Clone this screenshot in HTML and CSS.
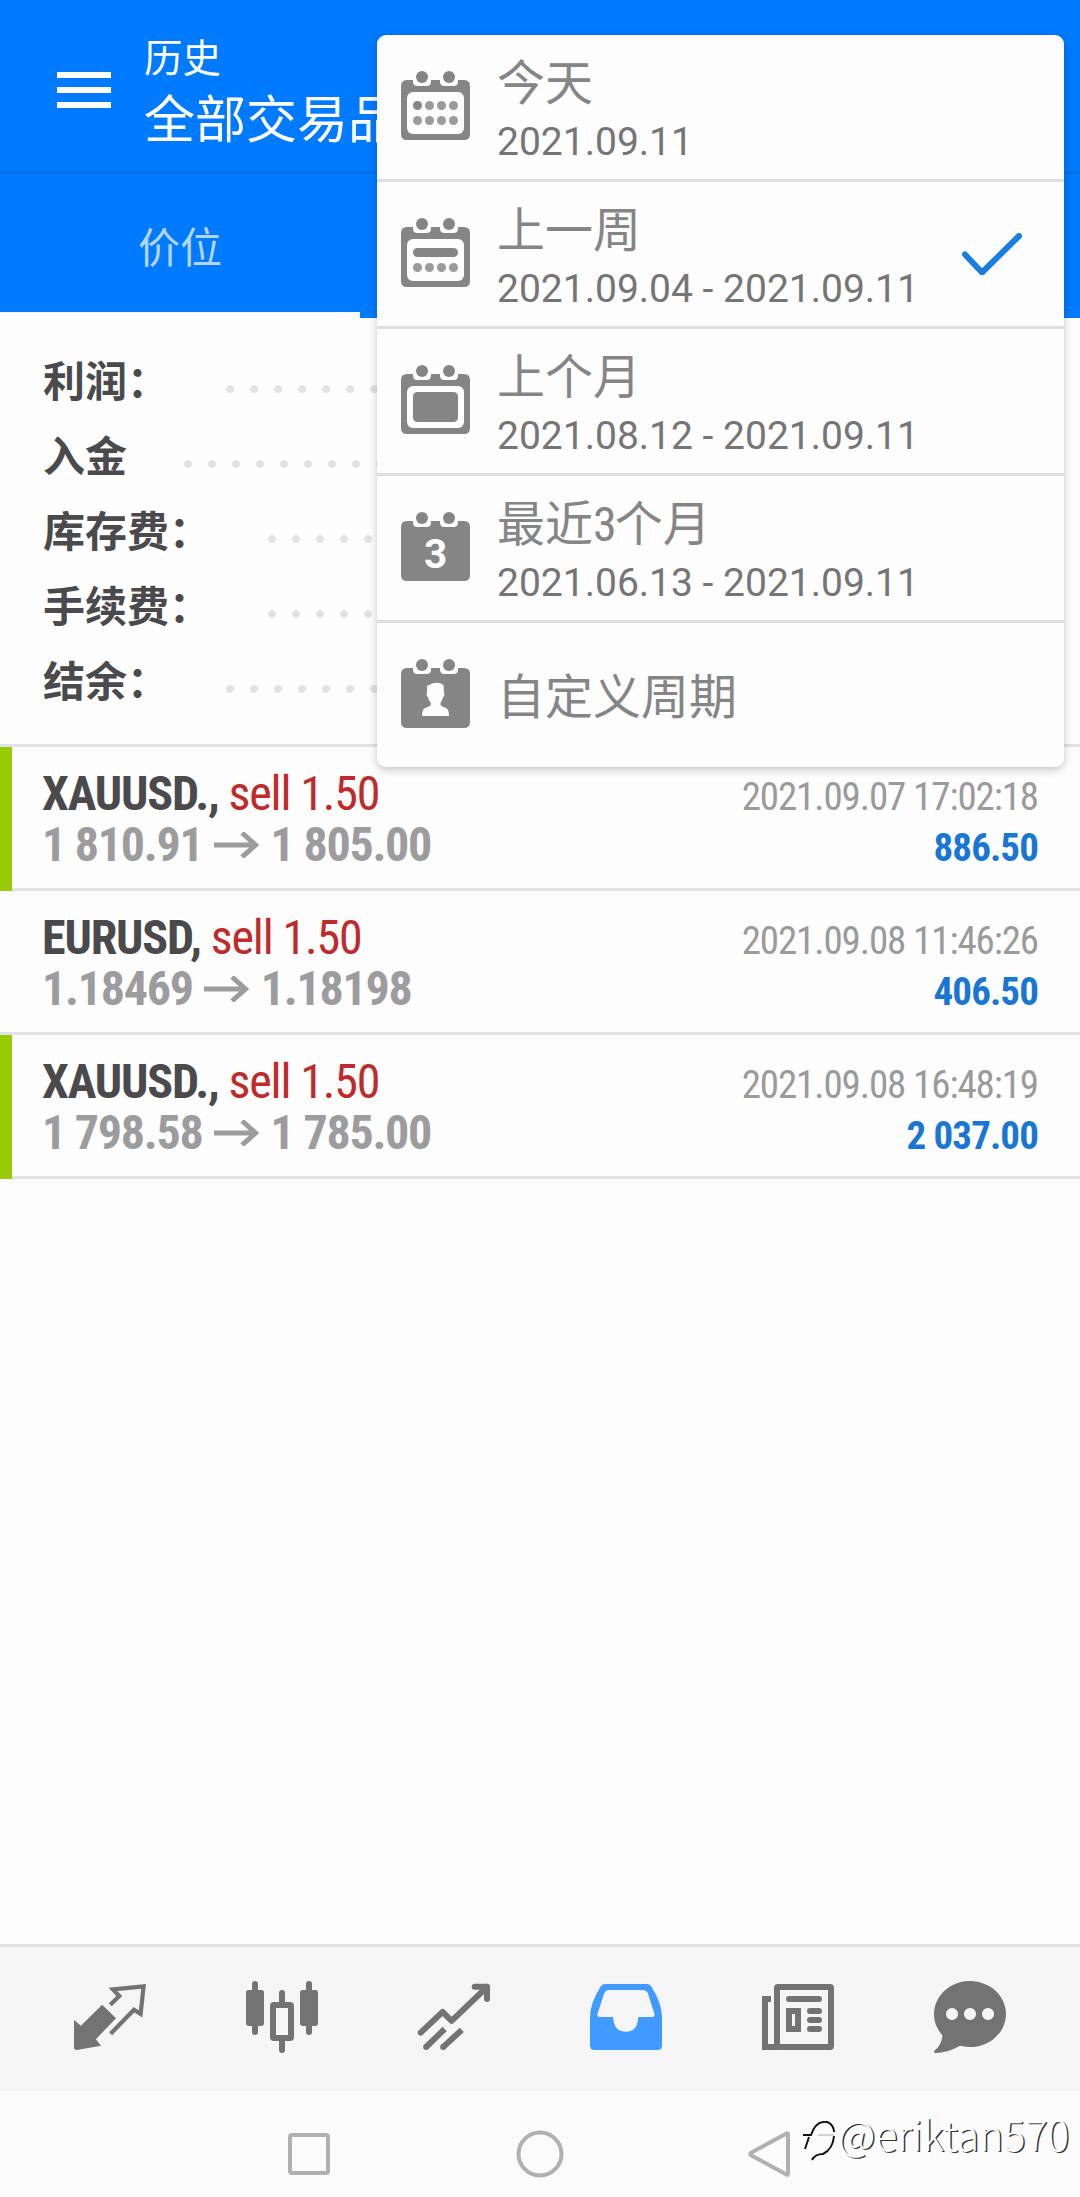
FILE: index.html
```html
<!DOCTYPE html>
<html lang="zh-CN">
<head>
<meta charset="utf-8">
<title>历史</title>
<link rel="stylesheet" href="styles.css">
</head>
<body>
<div class="screen">
  <header class="appbar">
    <svg class="burger" viewBox="0 0 54 36"><path d="M0 3H54M0 18H54M0 33H54"/></svg>
    <div class="heading">
      <div class="heading-small">历史</div>
      <div class="heading-large">全部交易品种</div>
    </div>
  </header>
  <nav class="tabs"><div class="tab tab-active">价位</div></nav>

  <section class="summary">
    <div class="sum-row"><span>利润：</span><i class="leader"></i></div>
    <div class="sum-row"><span>入金</span><i class="leader"></i></div>
    <div class="sum-row"><span>库存费：</span><i class="leader"></i></div>
    <div class="sum-row"><span>手续费：</span><i class="leader"></i></div>
    <div class="sum-row"><span>结余：</span><i class="leader"></i></div>
  </section>

  <main class="deals">
    <article class="deal marked">
      <div class="line"><span class="cond symbol">XAUUSD., <span class="side">sell 1.50</span></span><span class="cond time">2021.09.07 17:02:18</span></div>
      <div class="line"><span class="prices"><span class="cond price">1 810.91</span><svg class="arrow" viewBox="0 0 45 26"><path d="M0 13H42M28 1L41.500 13L28 25"/></svg><span class="cond price">1 805.00</span></span><span class="cond profit">886.50</span></div>
    </article>
    <article class="deal">
      <div class="line"><span class="cond symbol">EURUSD, <span class="side">sell 1.50</span></span><span class="cond time">2021.09.08 11:46:26</span></div>
      <div class="line"><span class="prices"><span class="cond price">1.18469</span><svg class="arrow" viewBox="0 0 45 26"><path d="M0 13H42M28 1L41.500 13L28 25"/></svg><span class="cond price">1.18198</span></span><span class="cond profit">406.50</span></div>
    </article>
    <article class="deal marked">
      <div class="line"><span class="cond symbol">XAUUSD., <span class="side">sell 1.50</span></span><span class="cond time">2021.09.08 16:48:19</span></div>
      <div class="line"><span class="prices"><span class="cond price">1 798.58</span><svg class="arrow" viewBox="0 0 45 26"><path d="M0 13H42M28 1L41.500 13L28 25"/></svg><span class="cond price">1 785.00</span></span><span class="cond profit">2 037.00</span></div>
    </article>
  </main>

  <footer class="bottom-nav">
    <svg viewBox="0 0 24 24"><path class="fill" d="M0 13L2.3 14.9L9.4 7.9L14 12.4L7.3 19.4L9 21.6L.9 23Q0 23 0 22.2Z"/><path class="stroke thin" d="M12.1 7.9L15.1 5L13 2.8L23.2 1.8L22.2 11L20 9.6L12.2 17.6"/></svg>
    <svg viewBox="0 0 24 24"><rect class="fill" y="3" width="6" height="12" rx=".8"/><rect class="fill" x="18" y="3" width="6" height="12" rx=".8"/><path class="stroke round" d="M3 1V17M21 1V17M12 4V8M12 19V23"/><rect class="stroke" x="9" y="8" width="6" height="11" rx=".3"/></svg>
    <svg viewBox="0 0 24 24"><path class="stroke round" d="M.9 17.2L8.2 10.3L11.2 13.3L23 2M18.9 1.9H23V6"/><path class="stroke" d="M8.9 16L2.7 22M14.6 16.3L8.4 22"/><g class="fill"><circle cx="2.7" cy="22" r="1"/><circle cx="8.4" cy="22" r="1"/></g></svg>
    <svg class="current" viewBox="0 0 24 24"><path fill-rule="evenodd" d="M4.9 1H19.1Q20 1 20.5 1.9Q24 7.500 24 12V21.500Q24 23 22.500 23H1.500Q0 23 0 21.500V12Q0 7.500 3.500 1.900Q4 1 4.900 1ZM6.400 3Q5.200 3 4.700 4.200L2.500 11Q2.300 12 3.200 12H7.700Q7.900 16.900 12 16.900Q15.900 16.900 16.100 12H20.800Q21.700 12 21.500 11L19.300 4.200Q18.800 3 17.600 3Z"/></svg>
    <svg viewBox="0 0 24 24"><rect class="stroke" x="5" y="2" width="18" height="20" rx=".3"/><path class="stroke" d="M3 6H1V22H5"/><path class="stroke round" d="M9 6H19M16 10H19M16 13H19M16 16H19"/><rect class="stroke" x="9" y="10" width="3" height="6"/></svg>
    <svg viewBox="0 0 24 24"><path class="fill" fill-rule="evenodd" d="M2.800 18.100A12 11 0 1 1 8.700 21.600Q4.500 24 .4 24Q-.2 23.700 .2 23.200Q2.500 21.500 2.800 18.100ZM6 9a2 2 0 1 0 .01 0ZM12 9a2 2 0 1 0 .01 0ZM18 9a2 2 0 1 0 .01 0Z"/></svg>
  </footer>
  <div class="system-bar">
    <svg viewBox="0 0 48 48"><rect x="5" y="5" width="38" height="38" rx="2"/></svg>
    <svg viewBox="0 0 48 48"><circle cx="24" cy="24" r="21.500"/></svg>
    <svg viewBox="0 0 48 48"><path d="M39.500 3.500Q41 2.500 41 4.500V43.500Q41 45.500 39.500 44.500L4.500 25.500Q2 24 4.500 22.500Z"/></svg>
  </div>

  <div class="menu">
    <div class="item">
      <svg class="cal" viewBox="0 0 23 23"><use href="#frame"/><rect class="hole" x="2" y="7" width="19" height="14" rx="2"/><circle cx="5.500" cy="11.500" r="1.500"/><g class="pale"><circle cx="9.500" cy="11.500" r="1.500"/><circle cx="13.500" cy="11.500" r="1.500"/><circle cx="17.500" cy="11.500" r="1.500"/><use href="#days"/></g></svg>
      <div class="label"><div class="name">今天</div><div class="range">2021.09.11</div></div>
    </div>
    <div class="item">
      <svg class="cal" viewBox="0 0 23 23"><use href="#frame"/><rect class="hole" x="2" y="7" width="19" height="14" rx="2"/><rect x="4" y="10" width="15" height="3" rx="1.500"/><g class="pale"><use href="#days"/></g></svg>
      <div class="label"><div class="name">上一周</div><div class="range">2021.09.04 - 2021.09.11</div></div>
      <svg class="check" viewBox="0 0 60 42"><path d="M3 21.500L20 39.500L57 3"/></svg>
    </div>
    <div class="item">
      <svg class="cal" viewBox="0 0 23 23"><use href="#frame"/><rect class="hole" x="2" y="7" width="19" height="14" rx="2"/><rect x="4" y="9" width="15" height="10" rx="1.500"/></svg>
      <div class="label"><div class="name">上个月</div><div class="range">2021.08.12 - 2021.09.11</div></div>
    </div>
    <div class="item">
      <svg class="cal" viewBox="0 0 23 23"><use href="#frame"/><text class="hole three" x="11.500" y="18.700">3</text></svg>
      <div class="label"><div class="name">最近<span class="cond digit">3</span>个月</div><div class="range">2021.06.13 - 2021.09.11</div></div>
    </div>
    <div class="item">
      <svg class="cal" viewBox="0 0 23 23"><use href="#frame"/><path class="hole" d="M8.700 8.900Q9.500 8.600 10 8.300Q12.500 7.300 14.200 8.700L14.300 10.800Q14.700 12.500 14 12.700Q13.600 14.300 13.200 14.400V15.300Q13.500 15.800 15 16.300Q16 16.700 16 19H7Q7 16.700 8 16.300Q9.600 15.800 9.900 15.300V14.400Q9.300 14.200 9 12.700Q8.300 12.500 8.700 10.800Z"/></svg>
      <div class="label single"><div class="name">自定义周期</div></div>
    </div>
  </div>

  <div class="watermark"><svg viewBox="0 0 34 42"><path class="wm-light" d="M1 15H7Q10 2 20 2Q30 2 30 15Q29 29 19 33Q13 33 9 39M6 17L2 29"/><path class="wm-shadow" d="M0 14H8Q12 2 20 1Q24 0 27 2.500Q31 6 31 11M31 15Q30 28 20 33Q12 33 9 39M6 16L2 28"/><path class="wm-hair" d="M15 14H31"/></svg><span>@eriktan570</span></div>
</div>

<svg class="defs" width="0" height="0">
  <defs>
    <g id="frame"><path d="M2 3H4V3.500Q4 5 5.500 5H8.500Q10 5 10 3.500V3H13V3.500Q13 5 14.500 5H17.500Q19 5 19 3.500V3H21Q23 3 23 5V21Q23 23 21 23H2Q0 23 0 21V5Q0 3 2 3Z"/><circle cx="7" cy="2" r="2"/><circle cx="16" cy="2" r="2"/></g>
    <g id="days"><circle cx="5.500" cy="16.500" r="1.500"/><circle cx="9.500" cy="16.500" r="1.500"/><circle cx="13.500" cy="16.500" r="1.500"/><circle cx="17.500" cy="16.500" r="1.500"/></g>
  </defs>
</svg>
</body>
</html>
```
FILE: styles.css
```css
* { box-sizing: border-box; }
body { margin: 0; font-family: Roboto, "Noto Sans CJK SC", sans-serif; background: #fdfdfd; }
.defs { position: absolute; }
.screen { position: relative; width: 1080px; height: 2197px; overflow: hidden; display: flex; flex-direction: column; background: #fdfdfd; }

.appbar { height: 174px; flex: none; background: #007aff; border-bottom: 3px solid #006fe6; display: flex; padding: 34px 0 0 57px; }
.burger { width: 54px; height: 36px; margin-top: 38px; stroke: #fff; stroke-width: 6; }
.heading { margin-left: 33px; color: #fff; white-space: nowrap; }
.heading-small { font-size: 38.500px; line-height: 50px; }
.heading-large { font-size: 51px; line-height: 73px; }
.tabs { height: 144px; flex: none; background: #007aff; display: flex; }
.tab { width: 360px; text-align: center; font-size: 42px; line-height: 149px; color: #b5d5fa; }
.tab-active { border-bottom: 6px solid #fdfdfd; }

.summary { height: 429px; flex: none; padding: 23px 43px 0 43px; border-bottom: 3px solid #e2e2e2; }
.sum-row { height: 75px; display: flex; align-items: center; font-size: 42px; font-weight: 700; color: #4a4a4c; }
.leader { flex: 1; height: 8px; margin-top: 20px; margin-left: 46px; background: radial-gradient(circle at 15px 4px, #e2e2e2 3.600px, transparent 4.200px) 0 0 / 24px 8px repeat-x; }

.deals { flex: 1; }
.deal { height: 144px; border-bottom: 3px solid #e2e2e2; padding: 21px 42px 0 42px; position: relative; }
.marked::before { content: ""; position: absolute; left: 0; top: 0; width: 12px; height: 144px; background: #96cb05; }
.line { display: flex; justify-content: space-between; align-items: baseline; height: 51px; line-height: 51px; white-space: nowrap; }
.cond { font-family: "Roboto Condensed", Roboto, sans-serif; font-stretch: 75%; letter-spacing: -1.100px; }
.symbol { font-size: 48px; font-weight: 700; color: #4a4a4c; letter-spacing: -1.150px; }
.side { font-weight: 400; color: #bf2b2b; }
.price { font-size: 48px; font-weight: 700; color: #9c9c9f; letter-spacing: -1.250px; }
.time { font-size: 39px; color: #9a9a9a; }
.profit { font-size: 39px; font-weight: 700; color: #1976d2; letter-spacing: -.900px; }
.prices { display: flex; align-items: center; }
.arrow { width: 45px; height: 26px; margin: 0 12px 0 11px; fill: none; stroke: #9c9c9c; stroke-width: 5; }

.bottom-nav { height: 147px; flex: none; background: #f5f5f5; border-top: 3px solid #e2e2e2; display: flex; justify-content: space-around; padding: 34px 24px 0; }
.bottom-nav svg { width: 72px; height: 72px; overflow: visible; }
.fill { fill: #737373; }
.stroke { fill: none; stroke: #737373; stroke-width: 2; }
.round { stroke-linecap: round; stroke-linejoin: round; }
.thin { stroke-width: 1.400; }
.current { fill: #409aff; }
.system-bar { height: 106px; flex: none; background: #fbfbfb; display: flex; justify-content: center; gap: 183px; padding-top: 39px; }
.system-bar svg { width: 48px; height: 48px; fill: none; stroke: #b0b0b0; stroke-width: 4; }

.menu { position: absolute; left: 377px; top: 35px; width: 687px; height: 732px; background: #fdfdfd; border-radius: 9px; box-shadow: 0 3px 8px rgba(0,0,0,.22); }
.item { height: 147px; border-bottom: 3px solid #dedede; display: flex; padding-left: 24px; }
.item:last-child { border-bottom: 0; }
.cal { width: 69px; height: 69px; margin-top: 36px; fill: #858585; }
.pale { fill: #9b9b9b; }
.hole { fill: #fdfdfd; }
.three { font: 700 13.500px Roboto, sans-serif; text-anchor: middle; }
.label { margin-left: 27px; white-space: nowrap; }
.name { font-size: 48px; line-height: 60px; margin-top: 19px; color: #858585; }
.single .name { margin-top: 45px; }
.digit { letter-spacing: -2px; }
.range { font-size: 39px; line-height: 48px; margin-top: 4px; color: #757575; }
.check { width: 60px; height: 42px; margin: 51px 42px 0 auto; fill: none; stroke: #1b7de0; stroke-width: 6; stroke-linecap: round; stroke-linejoin: round; }

.watermark { position: absolute; left: 803px; top: 2106px; display: flex; font-family: "Noto Sans CJK SC", sans-serif; font-weight: 300; font-size: 41px; line-height: 54px; color: #fff; text-shadow: 1.500px 1px 0 #333; }
.watermark svg { width: 34px; height: 42px; margin: 15px 1px 0 0; fill: none; }
.wm-shadow { stroke: #111; stroke-width: 2; }
.wm-light { stroke: #fff; stroke-width: 5; }
.wm-hair { stroke: #aaa; stroke-width: 1; }
```
